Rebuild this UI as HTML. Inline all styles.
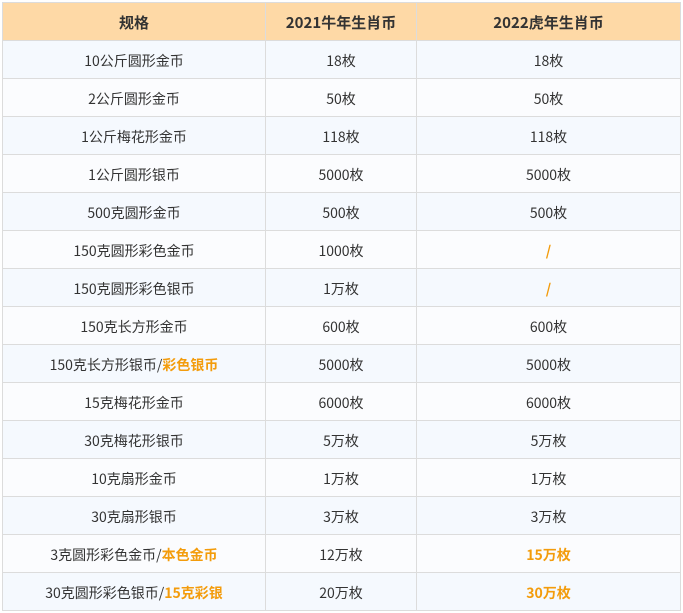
<!DOCTYPE html><html><head><meta charset="utf-8"><style>
body{margin:0;background:#fff;}
table{position:absolute;left:2px;top:2px;border-collapse:collapse;table-layout:fixed;width:678px;font-family:"Noto Sans CJK SC","Liberation Sans",sans-serif;font-size:14px;color:#333;}
td,th{border:1px solid #dcdcdc;height:35px;padding:2px 0 0 0;text-align:center;line-height:20px;}
th{background:#fed9a6;font-weight:bold;font-size:15px;color:#333;}
tr:nth-child(even) td{background:#f5f9fe;}
tr:nth-child(odd) td{background:#fbfcfe;}
.o{color:#f39c0c;font-weight:bold;}
</style></head><body>
<table>
<colgroup><col style="width:263px"><col style="width:151px"><col style="width:264px"></colgroup>
<tr><th>规格</th><th>2021牛年生肖币</th><th>2022虎年生肖币</th></tr>
<tr><td>10公斤圆形金币</td><td>18枚</td><td>18枚</td></tr>
<tr><td>2公斤圆形金币</td><td>50枚</td><td>50枚</td></tr>
<tr><td>1公斤梅花形金币</td><td>118枚</td><td>118枚</td></tr>
<tr><td>1公斤圆形银币</td><td>5000枚</td><td>5000枚</td></tr>
<tr><td>500克圆形金币</td><td>500枚</td><td>500枚</td></tr>
<tr><td>150克圆形彩色金币</td><td>1000枚</td><td class="o">/</td></tr>
<tr><td>150克圆形彩色银币</td><td>1万枚</td><td class="o">/</td></tr>
<tr><td>150克长方形金币</td><td>600枚</td><td>600枚</td></tr>
<tr><td>150克长方形银币/<span class="o">彩色银币</span></td><td>5000枚</td><td>5000枚</td></tr>
<tr><td>15克梅花形金币</td><td>6000枚</td><td>6000枚</td></tr>
<tr><td>30克梅花形银币</td><td>5万枚</td><td>5万枚</td></tr>
<tr><td>10克扇形金币</td><td>1万枚</td><td>1万枚</td></tr>
<tr><td>30克扇形银币</td><td>3万枚</td><td>3万枚</td></tr>
<tr><td>3克圆形彩色金币/<span class="o">本色金币</span></td><td>12万枚</td><td class="o">15万枚</td></tr>
<tr><td>30克圆形彩色银币/<span class="o">15克彩银</span></td><td>20万枚</td><td class="o">30万枚</td></tr>
</table>
</body></html>
